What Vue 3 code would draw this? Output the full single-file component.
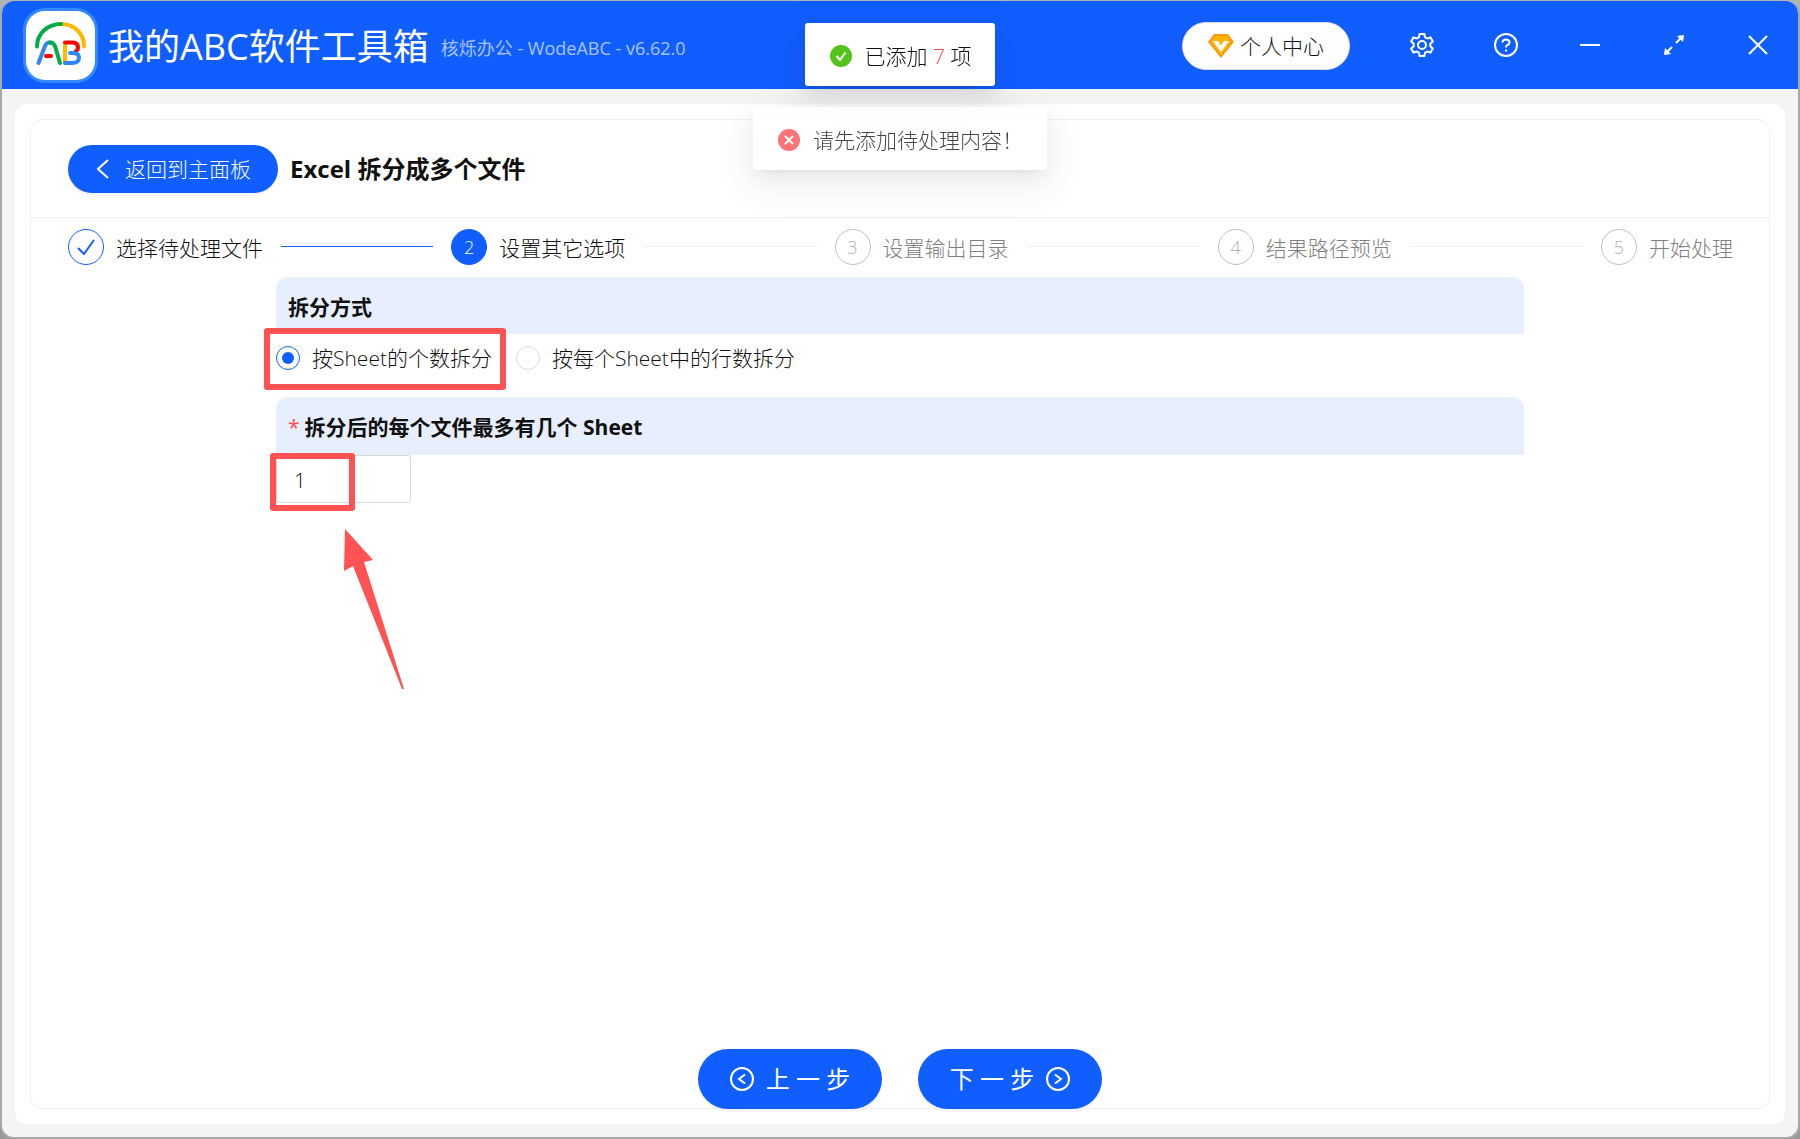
<script setup>
import { ref } from "vue";

const steps = [
  { title: "选择待处理文件", status: "finish" },
  { title: "设置其它选项", status: "process" },
  { title: "设置输出目录", status: "wait" },
  { title: "结果路径预览", status: "wait" },
  { title: "开始处理", status: "wait" },
];

const splitMode = ref("sheet");
const sheetCount = ref("1");
const addedCount = ref(7);
</script>

<template>
  <div class="window">
    <header class="titlebar">
      <svg class="logo" viewBox="0 0 75 75" aria-hidden="true">
        <rect width="75" height="75" rx="22" fill="#338aff" />
        <rect x="3" y="3" width="69" height="69" rx="19" fill="#fff" />
        <g fill="none" stroke-width="4" stroke-linecap="round" stroke-linejoin="round">
          <path d="M61 38.500C61 25 51 16 38 16" stroke="#fdb900" />
          <path d="M14 38.500C14 25 25 16 38 16" stroke="#00ac47" />
          <path d="M15.500 55 22 38Q24.500 33 28 35" stroke="#3086f8" />
          <path d="M27 34.500Q30 34 32 38L37 55" stroke="#00ac47" />
          <path d="M23 48H28" stroke="#f00" />
          <path d="M42 36V55" stroke="#fdb900" />
          <path d="M42 34.500H50Q55 35 55 39.500 55 42 53 43" stroke="#f00" />
          <path d="M42 55H50Q56 54.500 56 49.500 55.500 45 50 45H47" stroke="#3086f8" />
        </g>
      </svg>
      <h1 class="app-name">我的ABC软件工具箱</h1>
      <span class="app-version">核烁办公 - WodeABC - v6.62.0</span>

      <button class="profile" type="button">
        <svg width="26" height="24" viewBox="0 0 26 24" aria-hidden="true">
          <path d="M6 0H20L26 8 13 24 0 8Z" fill="#ff9a0a" />
          <path d="M7 2H19L23 8 13 21 3 8Z" fill="#ffb30f" />
          <path d="M5 7H10L13 11.500 16 7H21L13 18Z" fill="#fff" />
        </svg>
        个人中心
      </button>
      <nav class="controls">
        <button type="button" aria-label="设置">
          <svg viewBox="0 0 24 24">
            <path d="M9.700 1h4.600l.8 3.300 2.100 1.200 3.300-1 2.300 4-2.500 2.300v2.400l2.500 2.300-2.300 4-3.300-1-2.100 1.200-.8 3.300H9.700l-.8-3.300-2.100-1.200-3.300 1-2.300-4 2.500-2.300v-2.400L1.200 8.500l2.300-4 3.300 1 2.100-1.200z" />
            <circle cx="12" cy="12" r="4" />
          </svg>
        </button>
        <button type="button" aria-label="帮助">
          <svg viewBox="0 0 24 24">
            <circle cx="12" cy="12" r="11" />
            <path d="M8.500 9.500Q8.700 6.500 12 6.500 15.500 6.700 15.500 9.500 15.400 11.300 13.500 12 12 12.600 12 14.500" />
            <path d="M12 16.500v2" />
          </svg>
        </button>
        <button type="button" aria-label="最小化">
          <svg viewBox="0 0 24 24"><path d="M2 12H22" /></svg>
        </button>
        <button type="button" aria-label="最大化">
          <svg viewBox="0 0 24 24">
            <path d="M14 10 19 5M10 14 5 19" />
            <path d="M15 3 22 2 21 9ZM9 21 2 22 3 15Z" class="solid" />
          </svg>
        </button>
        <button type="button" aria-label="关闭">
          <svg viewBox="0 0 24 24"><path d="M3 3 21 21M21 3 3 21" /></svg>
        </button>
      </nav>
    </header>

    <main class="page">
      <section class="panel">
        <div class="panel-head">
          <button class="back" type="button">
            <svg width="12" height="20" viewBox="0 0 12 20" aria-hidden="true">
              <path d="M11 1 1 10 11 19" />
            </svg>
            返回到主面板
          </button>
          <h2>Excel 拆分成多个文件</h2>
        </div>

        <ol class="steps">
          <li v-for="(step, i) in steps" :key="step.title" class="step" :class="step.status">
            <span class="step-icon">
              <svg v-if="step.status === 'finish'" width="18" height="18" viewBox="0 0 18 18" aria-hidden="true">
                <path d="M1 10 7 16 17 2" />
              </svg>
              <template v-else>{{ i + 1 }}</template>
            </span>
            <span class="step-title">{{ step.title }}</span>
          </li>
        </ol>

        <form class="options" @submit.prevent>
          <h3 class="band">拆分方式</h3>
          <div class="radios">
            <label class="radio marked mark-radio">
              <input v-model="splitMode" type="radio" name="mode" value="sheet" />
              <span>按Sheet的个数拆分</span>
            </label>
            <label class="radio">
              <input v-model="splitMode" type="radio" name="mode" value="row" />
              <span>按每个Sheet中的行数拆分</span>
            </label>
          </div>
          <label class="band" for="sheet-count">
            <span class="required">*</span>拆分后的每个文件最多有几个 Sheet
          </label>
          <div class="count marked mark-count">
            <input id="sheet-count" v-model="sheetCount" type="text" />
            <svg class="arrow" width="62" height="162" viewBox="0 0 62 162" aria-hidden="true">
              <path d="M1 0 29 31 20 33 60 160 58 160 9 37 0 42Z" />
            </svg>
          </div>
        </form>

        <footer class="actions">
          <button type="button">
            <svg viewBox="0 0 24 24" aria-hidden="true">
              <circle cx="12" cy="12" r="11" />
              <path d="M15 7.500 9 12 15 16.500" />
            </svg>
            上 一 步
          </button>
          <button type="button">
            下 一 步
            <svg viewBox="0 0 24 24" aria-hidden="true">
              <circle cx="12" cy="12" r="11" />
              <path d="M9 7.500 15 12 9 16.500" />
            </svg>
          </button>
        </footer>
      </section>
    </main>

    <div class="messages">
      <div class="message" role="status">
        <svg viewBox="0 0 24 24" aria-hidden="true">
          <circle cx="12" cy="12" r="12" fill="#52c41a" />
          <path d="M7.500 12 11 16 16.500 8.500" />
        </svg>
        <span>已添加 <em>{{ addedCount }}</em> 项</span>
      </div>
      <div class="message leaving" role="alert">
        <svg viewBox="0 0 24 24" aria-hidden="true">
          <circle cx="12" cy="12" r="12" fill="#ff4d4f" />
          <path d="M8 8 16 16M16 8 8 16" />
        </svg>
        <span>请先添加待处理内容！</span>
      </div>
    </div>
  </div>
</template>

<style>
body {
  background: linear-gradient(#b4b4b4, #999);
}
</style>

<style scoped>
* {
  box-sizing: border-box;
}
.window {
  display: flex;
  flex-direction: column;
  min-height: 100vh;
  border: 2px solid #a8a8a8;
  border-top: 1px solid #b4b4b4;
  border-radius: 14px;
  overflow: hidden;
  background: #f4f4f4;
  color: #111;
  font-family: "Open Sans", "Noto Sans CJK SC", sans-serif;
  font-size: 21px;
  font-weight: 300;
  line-height: 32px;
}
button {
  padding: 0;
  border: 0;
  background: none;
  color: inherit;
  font: inherit;
  cursor: pointer;
}
h1,
h2,
h3,
ol {
  margin: 0;
  padding: 0;
}
svg {
  display: block;
  flex: none;
}

.titlebar {
  display: flex;
  align-items: center;
  height: 88px;
  padding: 0 8px 0 21px;
  background: #115eff;
  color: #fff;
}
.logo {
  width: 75px;
  height: 75px;
}
.app-name {
  margin-left: 10px;
  padding-top: 4px;
  font-size: 36px;
  font-weight: 400;
}
.app-version {
  margin-left: 12px;
  padding-top: 6px;
  color: rgba(255, 255, 255, 0.65);
  font-size: 18px;
  font-weight: 400;
}
.profile {
  display: flex;
  align-items: center;
  justify-content: center;
  gap: 6px;
  width: 168px;
  height: 48px;
  margin: 2px 40px 0 auto;
  border: 1px solid #d9d9d9;
  border-radius: 24px;
  background: #fff;
  color: #111;
}
.controls {
  display: flex;
  gap: 20px;
}
.controls button {
  display: flex;
  align-items: center;
  justify-content: center;
  width: 64px;
  height: 48px;
}
.controls svg {
  width: 24px;
  height: 24px;
  fill: none;
  stroke: #fff;
  stroke-width: 2;
}
.controls .solid {
  fill: #fff;
  stroke: none;
}

.page {
  display: flex;
  flex: 1;
  margin: 15px 13px 13px;
  padding: 15px;
  border-radius: 12px;
  background: #fff;
}
.panel {
  display: flex;
  flex: 1;
  flex-direction: column;
  border: 1px solid #f0f0f0;
  border-radius: 12px;
}
.panel-head {
  display: flex;
  align-items: center;
  gap: 12px;
  height: 98px;
  padding: 0 37px;
  border-bottom: 1px solid #f0f0f0;
}
.panel-head h2 {
  font-size: 24px;
  font-weight: 700;
}
.back {
  display: flex;
  align-items: center;
  justify-content: center;
  gap: 16px;
  width: 210px;
  height: 48px;
  padding-left: 2px;
  border-radius: 24px;
  background: #115eff;
  box-shadow: 0 3px 0 rgba(0, 0, 0, 0.04);
  color: #fff;
}
.back svg {
  fill: none;
  stroke: #fff;
  stroke-width: 2;
}

.steps {
  display: flex;
  padding: 11px 36px 12px 37px;
  list-style: none;
}
.step {
  display: flex;
  flex: 1;
  align-items: center;
  gap: 12px;
}
.step:last-child {
  flex: none;
}
.step:not(:last-child)::after {
  content: "";
  flex: 1;
  height: 2px;
  margin: 0 18px 0 6px;
  border-top: 1px solid #f0f0f0;
}
.step-icon {
  display: flex;
  align-items: center;
  justify-content: center;
  width: 36px;
  height: 36px;
  border: 1px solid #115eff;
  border-radius: 50%;
  font-size: 18px;
}
.step-title {
  padding-top: 2px;
}
.step-icon svg {
  fill: none;
  stroke: #115eff;
  stroke-width: 2;
}
.step.finish::after {
  border-color: #115eff;
}
.step.process .step-icon {
  background: #115eff;
  color: #fff;
}
.step.wait {
  color: #808080;
}
.step.wait .step-icon {
  border-color: #bfbfbf;
  color: #b0b0b0;
}

.options {
  flex: 1;
  margin: 0 245px;
}
.band {
  display: flex;
  align-items: center;
  height: 58px;
  padding: 2px 12px 0;
  border-radius: 12px 12px 0 0;
  background: #e7eefd;
  font-size: 21px;
  font-weight: 700;
}
h3.band {
  height: 57px;
}
.required {
  margin-right: 5px;
  color: #ff4d4f;
  font-weight: 400;
}
.radios {
  display: flex;
  gap: 24px;
  height: 63px;
  padding-top: 8px;
}
.radio {
  display: flex;
  align-items: center;
  gap: 12px;
  height: 32px;
}
.radio input {
  display: grid;
  place-items: center;
  width: 24px;
  height: 24px;
  margin: 0;
  border: 1px solid #d9d9d9;
  border-radius: 50%;
  appearance: none;
}
.radio input:checked {
  border-color: #115eff;
}
.radio input:checked::before {
  content: "";
  width: 12px;
  height: 12px;
  border-radius: 50%;
  background: #115eff;
}
.count {
  width: 135px;
}
.count input {
  display: block;
  width: 100%;
  height: 48px;
  padding: 2px 17px 0;
  border: 1px solid #d9d9d9;
  border-radius: 3px;
  background: #fff;
  color: inherit;
  font: inherit;
}

/* red callouts over the fields */
.marked {
  position: relative;
}
.marked::after {
  content: "";
  position: absolute;
  border: 6px solid #ff5252;
  border-radius: 3px;
  pointer-events: none;
}
.mark-radio::after {
  inset: -14px -14px -16px -12px;
}
.mark-count::after {
  inset: -2px 56px -8px -6px;
}
.arrow {
  position: absolute;
  top: 74px;
  left: 68px;
  fill: #ff5252;
}

.actions {
  display: flex;
  justify-content: center;
  gap: 36px;
  margin-bottom: -1px;
}
.actions button {
  display: flex;
  align-items: center;
  justify-content: center;
  gap: 12px;
  width: 184px;
  height: 60px;
  border-radius: 30px;
  background: #115eff;
  box-shadow: 0 3px 0 rgba(0, 0, 0, 0.04);
  color: #fff;
  font-size: 24px;
  font-weight: 400;
}
.actions svg {
  width: 24px;
  height: 24px;
  fill: none;
  stroke: #fff;
  stroke-width: 2;
}

.messages {
  position: fixed;
  top: 23px;
  right: 0;
  left: 0;
  display: flex;
  flex-direction: column;
  align-items: center;
  gap: 21px;
  pointer-events: none;
}
.message {
  display: flex;
  align-items: center;
  gap: 12px;
  height: 63px;
  padding: 2px 24px 0;
  border-radius: 3px;
  background: #fff;
  box-shadow:
    0 5px 9px -6px rgba(0, 0, 0, 0.12),
    0 9px 24px rgba(0, 0, 0, 0.08),
    0 14px 42px 12px rgba(0, 0, 0, 0.05);
}
.message svg {
  width: 24px;
  height: 24px;
  fill: none;
  stroke: #fff;
  stroke-width: 2;
}
.message em {
  color: #ff4d4f;
  font-style: normal;
}
.leaving {
  opacity: 0.78;
}
</style>
